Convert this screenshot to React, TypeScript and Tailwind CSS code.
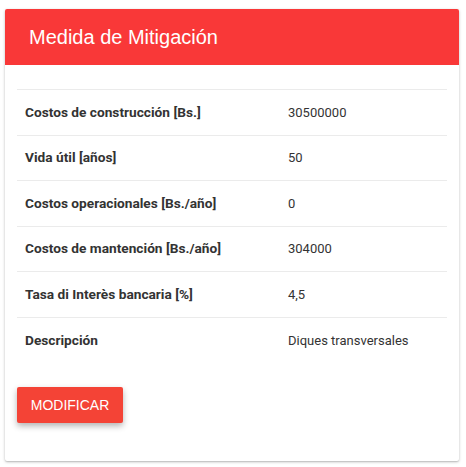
import React from "react";

const rows: [string, string][] = [
  ["Costos de construcción [Bs.]", "30500000"],
  ["Vida útil [años]", "50"],
  ["Costos operacionales [Bs./año]", "0"],
  ["Costos de mantención [Bs./año]", "304000"],
  ["Tasa di Interès bancaria [%]", "4,5"],
  ["Descripción", "Diques transversales"],
];

export default function App() {
  return (
    <div className="w-[466px] h-[467px] bg-white pt-[9px] pl-[5px]">
      <div className="w-[454px] h-[452px] bg-white rounded-[2px] shadow-[0_1px_3px_rgba(0,0,0,0.25),0_1px_1px_rgba(0,0,0,0.08)] flex flex-col overflow-hidden">
        <div className="h-[56px] bg-[#f93838] flex items-center pl-[24px]">
          <span className="text-white text-[20px] font-['Liberation_Sans',Arial,sans-serif]">
            Medida de Mitigación
          </span>
        </div>
        <div className="px-[12px] pt-[24px]">
          <div className="border-t border-[#ebebeb]">
            {rows.map(([k, v], i) => (
              <div
                key={k}
                className={`grid grid-cols-[263px_1fr] h-[45.5px] items-center font-['Roboto',sans-serif] text-[13px] text-[#333] ${i < rows.length - 1 ? "border-b border-[#ebebeb]" : ""}`}
              >
                <div className="pl-[8px] font-bold text-[13.7px]">{k}</div>
                <div className="pl-[8px]">{v}</div>
              </div>
            ))}
          </div>
          <div className="mt-[24px]">
            <button className="h-[36px] w-[106px] bg-[#f44336] text-white rounded-[2px] text-[14px] font-['Liberation_Sans',Arial,sans-serif] shadow-[0_3px_6px_rgba(0,0,0,0.3)]">
              MODIFICAR
            </button>
          </div>
        </div>
      </div>
    </div>
  );
}
